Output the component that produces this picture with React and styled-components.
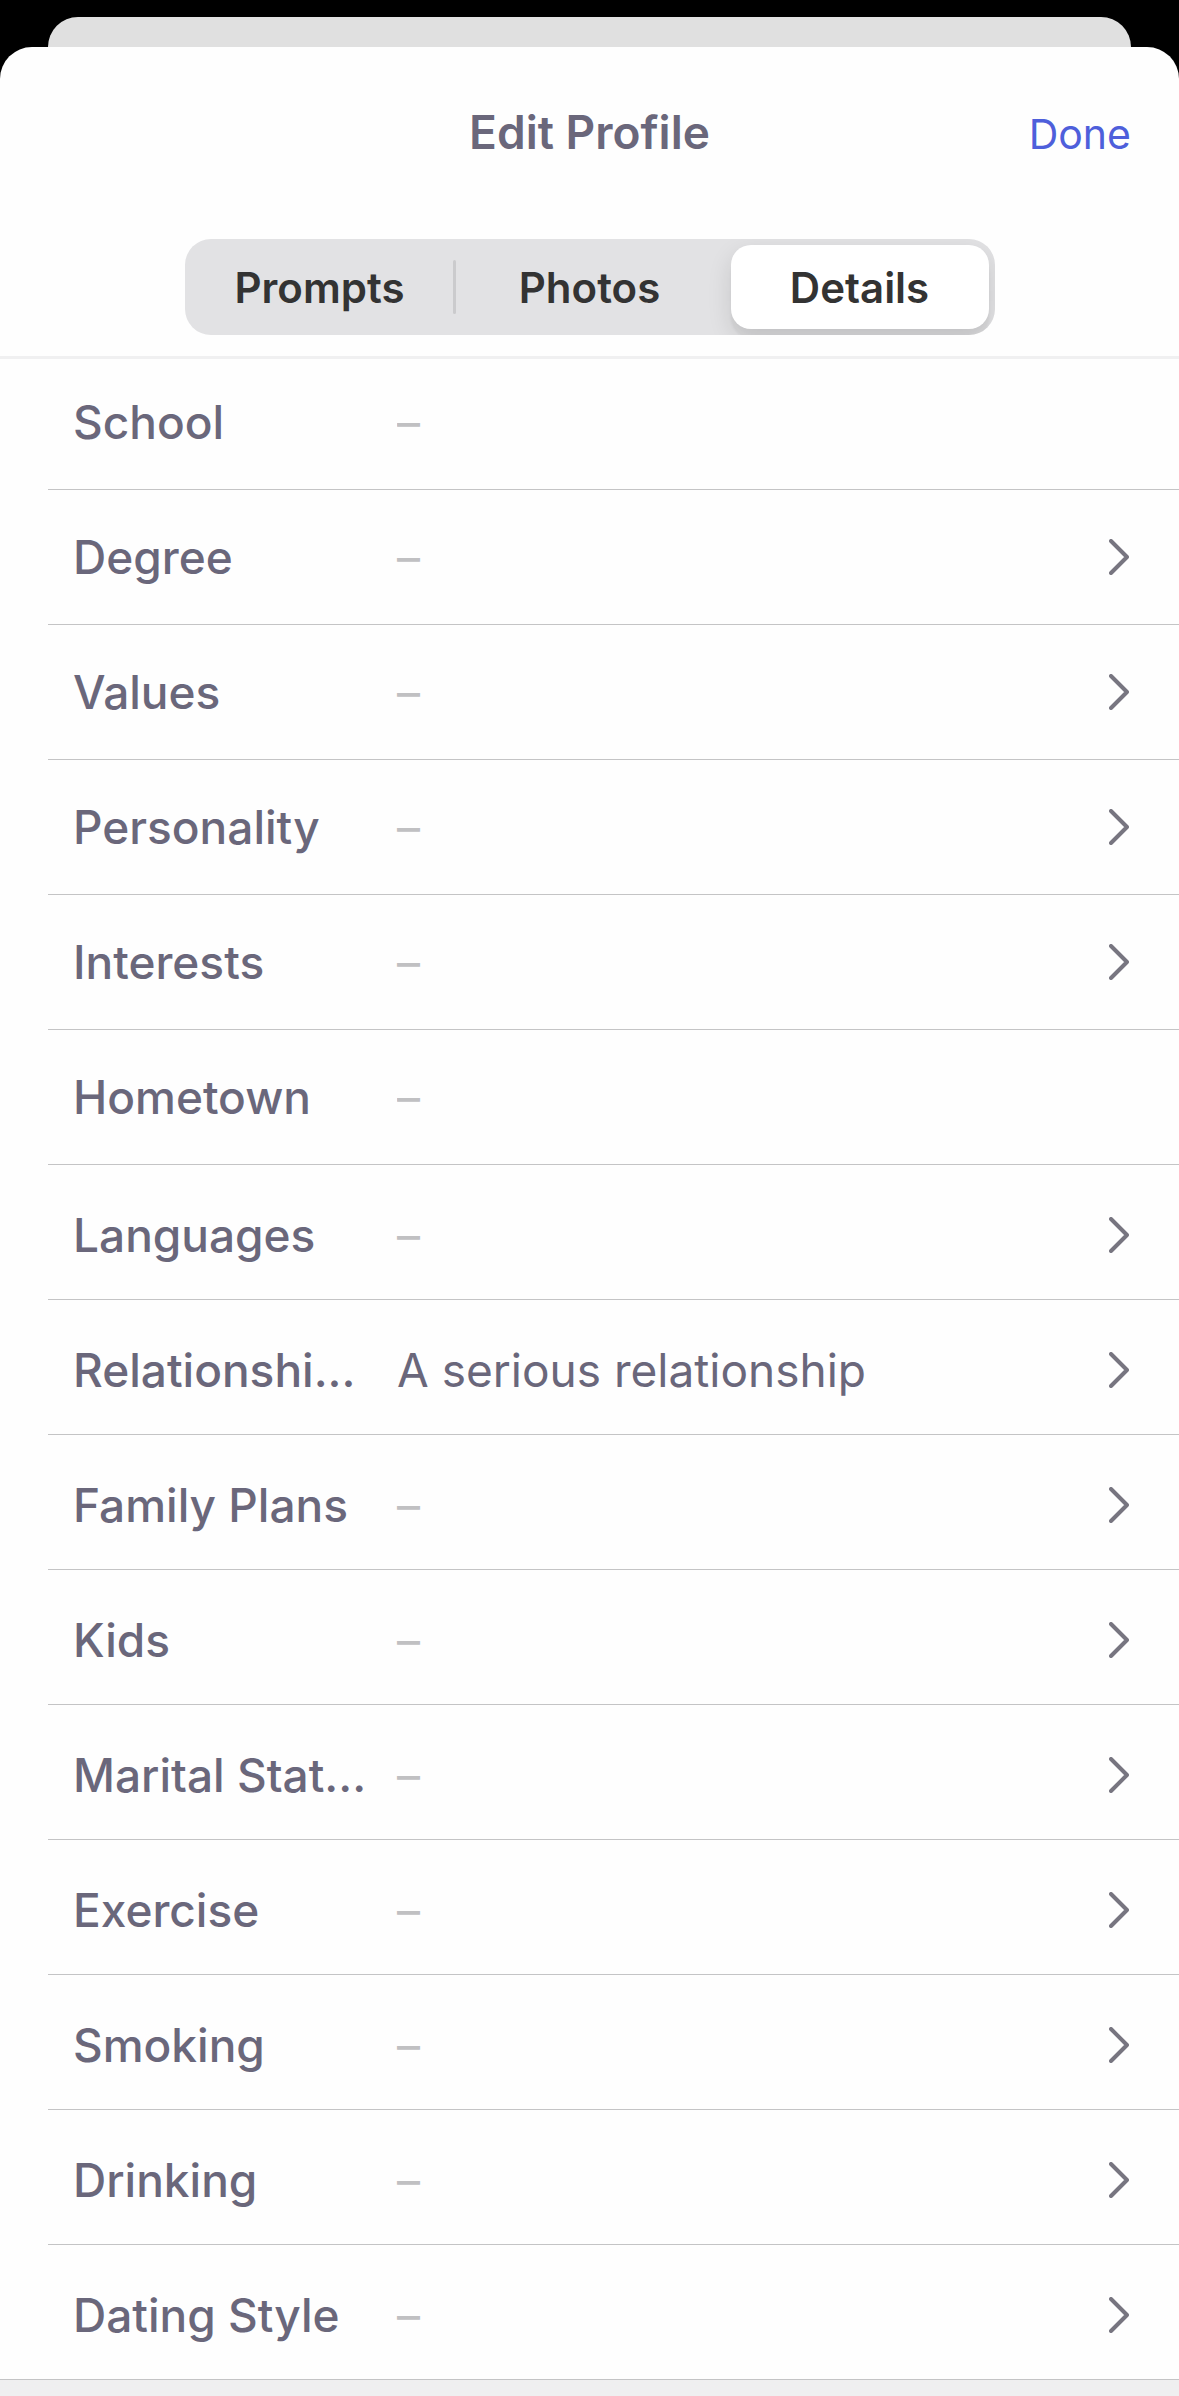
import React, { useState } from "react";
import styled, { createGlobalStyle } from "styled-components";

const tabs = ["Prompts", "Photos", "Details"];

const basics = [
  { label: "School", editable: true },
  { label: "Degree" },
  { label: "Values" },
  { label: "Personality" },
  { label: "Interests" },
  { label: "Hometown", editable: true },
];

const lifestyle = [
  { label: "Languages" },
  { label: "Relationshi...", value: "A serious relationship" },
  { label: "Family Plans" },
  { label: "Kids" },
  { label: "Marital Stat..." },
  { label: "Exercise" },
  { label: "Smoking" },
  { label: "Drinking" },
  { label: "Dating Style" },
];

function Chevron() {
  return (
    <svg width="20" height="36" viewBox="0 0 20 36" fill="none" aria-hidden="true">
      <path
        d="M2 2 L18 18 L2 34"
        stroke="#777580"
        strokeWidth="4"
        strokeLinecap="round"
        strokeLinejoin="round"
      />
    </svg>
  );
}

function DetailRow({ label, value, editable }) {
  if (editable) {
    return (
      <Row as="label">
        <Label>{label}</Label>
        <Field type="text" placeholder="–" />
      </Row>
    );
  }
  return (
    <Row type="button">
      <Label>{label}</Label>
      <Value $empty={!value}>{value || "–"}</Value>
      <Chevron />
    </Row>
  );
}

function App() {
  const [selected, setSelected] = useState("Details");
  return (
    <>
      <GlobalStyle />
      <Screen>
        <BackSheet />
        <Sheet>
          <Header>
            <Title>Edit Profile</Title>
            <Done type="button">Done</Done>
          </Header>
          <TabBar>
            <Segments>
              {tabs.map((tab) => (
                <Segment
                  key={tab}
                  type="button"
                  aria-pressed={selected === tab}
                  $active={selected === tab}
                  onClick={() => setSelected(tab)}
                >
                  {tab}
                </Segment>
              ))}
            </Segments>
          </TabBar>
          <List>
            <Group>
              {basics.map((item) => (
                <DetailRow key={item.label} {...item} />
              ))}
            </Group>
            <Group $drop>
              {lifestyle.map((item) => (
                <DetailRow key={item.label} {...item} />
              ))}
            </Group>
          </List>
          <Footer />
        </Sheet>
      </Screen>
    </>
  );
}

const GlobalStyle = createGlobalStyle`
  * {
    box-sizing: border-box;
  }
  body {
    margin: 0;
    background-color: #000;
    font-family: Inter, "Liberation Sans", sans-serif;
  }
  button, input {
    font-family: inherit;
    border: none;
    padding: 0;
    background: none;
  }
  button {
    cursor: pointer;
  }
`;

const Screen = styled.div`
  display: flex;
  flex-direction: column;
  min-height: 100vh;
  padding-top: 17px;
  background-color: #000;
`;

const BackSheet = styled.div`
  height: 30px;
  margin: 0 48px;
  border-radius: 30px 30px 0 0;
  background-color: #e0e0e0;
`;

const Sheet = styled.main`
  display: flex;
  flex-direction: column;
  flex: 1;
  border-radius: 32px 32px 0 0;
  background-color: #fefefe;
  overflow: hidden;
`;

const Header = styled.header`
  display: grid;
  grid-template-columns: 1fr auto 1fr;
  align-items: baseline;
  padding: 55px 48px 0;
`;

const Title = styled.h1`
  grid-column: 2;
  margin: 0;
  font-size: 46px;
  line-height: 60px;
  font-weight: 600;
  color: #6a677b;
`;

const Done = styled.button`
  justify-self: end;
  font-size: 41px;
  line-height: 60px;
  color: #4e5fdb;
`;

const TabBar = styled.nav`
  display: flex;
  justify-content: center;
  padding: 75px 24px 21px;
  border-bottom: 3px solid #f0f0f1;
`;

const Segments = styled.div`
  display: grid;
  grid-template-columns: repeat(3, 1fr);
  width: 810px;
  height: 96px;
  border-radius: 26px;
  background-color: #e2e2e4;
  overflow: hidden;
`;

const Segment = styled.button`
  position: relative;
  margin: 6px;
  border-radius: 20px;
  font-size: 42px;
  font-weight: 600;
  color: #333;
  background-color: ${({ $active }) => ($active ? "#fff" : "transparent")};
  box-shadow: ${({ $active }) =>
    $active ? "0 9px 24px rgba(0, 0, 0, 0.12), 0 9px 3px rgba(0, 0, 0, 0.04)" : "none"};

  /* hairline between two unselected segments */
  &[aria-pressed="false"] + &[aria-pressed="false"]::before {
    content: "";
    position: absolute;
    left: -8px;
    top: 15px;
    bottom: 15px;
    width: 3px;
    border-radius: 2px;
    background-color: #cbcbcd;
  }
`;

const List = styled.section`
  display: flex;
  flex-direction: column;
  margin-top: -4px;
`;

const Row = styled.button`
  display: flex;
  align-items: center;
  width: 100%;
  height: 135px;
  padding-right: 50px;
  padding-left: 25px;
  border-bottom: 1px solid #c4c4c5;
  text-align: left;
`;

const Group = styled.div`
  padding-left: 48px;

  ${Row} {
    padding-top: ${({ $drop }) => ($drop ? "5px" : "0")};
  }
`;

const Label = styled.span`
  flex: 0 0 324px;
  font-size: 46px;
  line-height: 60px;
  font-weight: 500;
  color: #6a677b;
  white-space: nowrap;
`;

const Value = styled.span`
  flex: 1;
  font-size: 46px;
  line-height: 60px;
  color: ${({ $empty }) => ($empty ? "#c0c0c2" : "#6a677b")};
`;

const Field = styled.input`
  flex: 1;
  min-width: 0;
  font-size: 46px;
  line-height: 60px;
  color: #6a677b;
  outline: none;

  &::placeholder {
    color: #c0c0c2;
    opacity: 1;
  }
`;

/* pulled up so its rule runs over the last row's border */
const Footer = styled.footer`
  flex: 1;
  margin-top: -1px;
  border-top: 1px solid #c4c4c5;
  background-color: #efeff0;
`;

export default App;
